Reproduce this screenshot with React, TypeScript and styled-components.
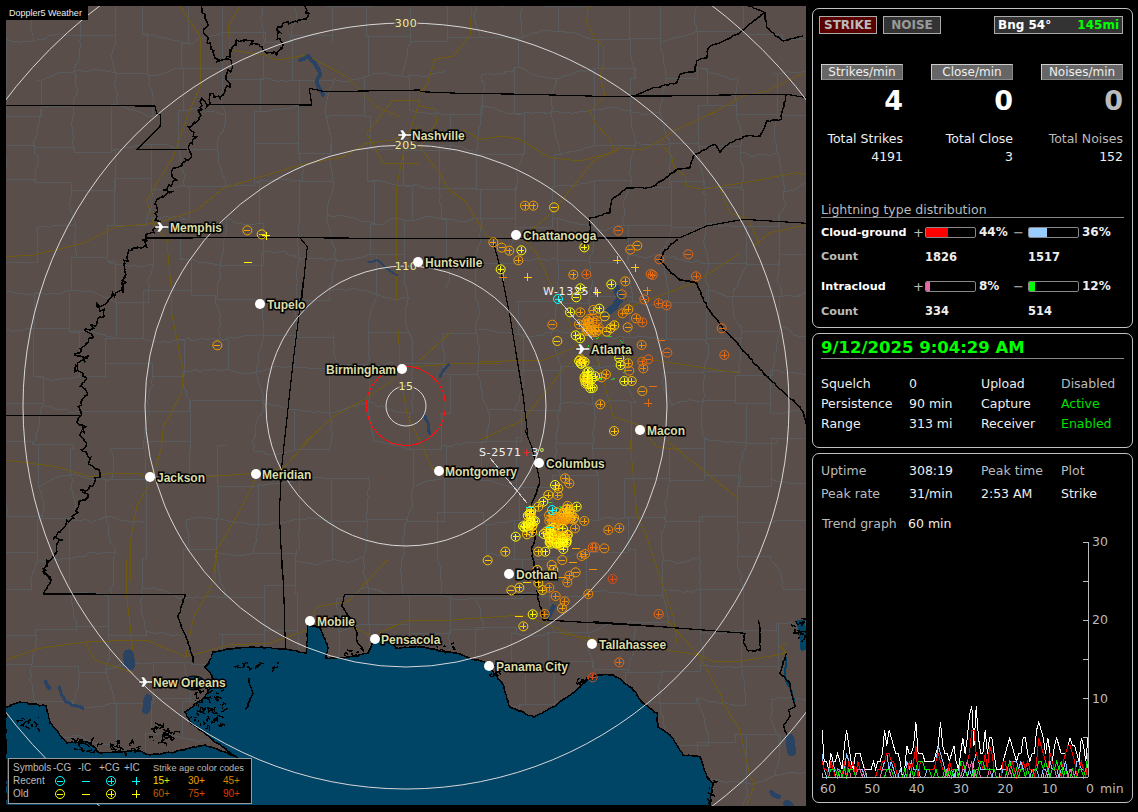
import styled, {createGlobalStyle} from "styled-components";

type Pt = [number, number];
type StrikeKind = "p" | "m" | "P" | "M";
type Strike = [number, number, StrikeKind, string];

const GlobalStyle = createGlobalStyle`
    html, body {
        margin: 0;
        padding: 0;
        background: #000;
    }
    body {
        font-family: "DejaVu Sans", Verdana, sans-serif;
        font-size: 12.5px;
        color: #eee;
    }
`

// coordinates below were read from crops of the picture, each crop has its own origin and scale
const view = (ox: number, oy: number, sx = 3, sy = 3) => (...flat: number[]): Pt[] => {
    const out: Pt[] = [];
    for (let i = 0; i < flat.length; i += 2) out.push([ox + flat[i] / sx, oy + flat[i + 1] / sy]);
    return out;
};
const z5 = view(480, 200);
const z6 = view(460, 430);
const z7 = view(0, 0);
const z8 = view(300, 330);
const z9 = view(0, 560, 2.53, 3);
const z10 = view(560, 620);
const z11 = view(420, 6);
const z12 = view(0, 280);

const seeded = (seed: number) => () => {
    seed = (seed * 1664525 + 1013904223) % 4294967296;
    return seed / 4294967296;
};

const smooth = (pts: Pt[]) => "M" + pts.map(p => `${p[0].toFixed(1)} ${p[1].toFixed(1)}`).join("L");

const jagged = (pts: Pt[], amp: number, seed: number, step = 4) => {
    const rnd = seeded(seed);
    const out: Pt[] = [pts[0]];
    for (let i = 1; i < pts.length; i++) {
        const [ax, ay] = pts[i - 1];
        const [bx, by] = pts[i];
        const n = Math.max(1, Math.round(Math.hypot(bx - ax, by - ay) / step));
        for (let k = 1; k <= n; k++) {
            const t = k / n;
            const j = k === n ? 0 : amp;
            out.push([ax + (bx - ax) * t + (rnd() - .5) * j, ay + (by - ay) * t + (rnd() - .5) * j]);
        }
    }
    return smooth(out);
};

const buildCounties = () => {
    const rnd = seeded(77);
    const size = 37;
    const cols = 23;
    const rows = 23;
    const nodes: Pt[][] = [];
    for (let r = 0; r < rows; r++) {
        nodes.push([]);
        for (let c = 0; c < cols; c++) {
            nodes[r].push([c * size + (rnd() - .5) * 14, r * size + (rnd() - .5) * 14]);
        }
    }
    let d = "";
    const edge = (a: Pt, b: Pt) => {
        if (rnd() < .14) return;
        if (rnd() < .55) {
            d += smooth([a, [b[0], a[1]], b]);
        } else {
            const mid: Pt = [(a[0] + b[0]) / 2 + (rnd() - .5) * 8, (a[1] + b[1]) / 2 + (rnd() - .5) * 8];
            d += jagged([a, mid, b], 3, Math.floor(rnd() * 9999), 5);
        }
    };
    for (let r = 0; r < rows; r++) {
        for (let c = 0; c < cols; c++) {
            if (c < cols - 1) edge(nodes[r][c], nodes[r][c + 1]);
            if (r < rows - 1) edge(nodes[r][c], nodes[r + 1][c]);
        }
    }
    return d;
};

const coast: Pt[] = [
    [6, 806], [6, 707], [20, 702], [46, 706], [50, 723], [67, 743], [87, 742], [100, 753], [120, 752], [135, 750],
    [150, 755], [175, 752], [190, 748], [205, 745], [225, 752], [238, 758], [213, 740], [190, 722], [185, 712],
    [205, 697], [215, 680], [205, 667], [209, 663], [213, 652], [237, 648], [253, 647], [285, 649], [306, 653],
    [308, 625], [320, 628], [328, 648], [326, 658], [344, 658], [368, 653], [375, 635], [389, 640], [396, 648],
    [419, 647], [455, 653], [486, 663], [502, 683], [510, 707], [534, 717], [553, 707], [573, 693], [580, 687],
    [587, 680], [597, 675], [613, 675], [632, 688], [643, 703], [657, 713], [658, 727], [670, 735], [678, 747],
    [683, 755], [700, 757], [707, 777], [713, 783], [710, 806],
];

const stateLines: Pt[][] = [
    z7(18, 316, 465, 318, 470, 340, 482, 345, 480, 380, 412, 448, 560, 448),
    z7(630, 313, 935, 315, 928, 265, 975, 275, 1260, 270),
    z11(0, 257, 120, 262, 320, 265, 580, 272, 640, 270, 740, 270, 1040, 265, 1100, 265, 1160, 275),
    z7(435, 714, 900, 713, 1260, 716),
    z11(0, 698, 780, 695, 860, 660, 970, 640, 1160, 652),
    z7(900, 713, 922, 740, 905, 900),
    z12(910, 0, 880, 240, 845, 560, 838, 700, 848, 900),
    z9(714, 0, 718, 100, 722, 265),
    z9(110, 102, 470, 103),
    z9(872, 103, 1360, 103),
    z12(18, 406, 240, 406),
    z5(40, 127, 60, 200, 90, 350, 130, 590, 145, 720),
    z6(195, 0, 215, 50, 235, 130, 240, 160),
    z6(290, 572, 600, 590, 660, 595),
    z10(100, 5, 240, 15, 555, 40),
];

const wigglyLines: Pt[][] = [
    z7(605, 18, 625, 75, 610, 95, 625, 130, 645, 175, 665, 180, 680, 170, 710, 120, 740, 118, 790, 150, 830, 165, 850, 135, 830, 90, 850, 68, 900, 60, 928, 40, 915, 18),
    z7(680, 170, 695, 195, 680, 240, 690, 250, 675, 270, 660, 295, 640, 280, 620, 320, 605, 295, 600, 330, 590, 365, 565, 380, 590, 410, 565, 440, 575, 470, 545, 490, 515, 520, 530, 540, 490, 570, 515, 575, 470, 600, 465, 640, 475, 680, 430, 720, 440, 740, 395, 745, 375, 790, 370, 880),
    z12(370, 0, 365, 30, 335, 50, 320, 70, 290, 80, 310, 100, 270, 150, 255, 150, 280, 170, 250, 200, 225, 225, 265, 225, 225, 265, 260, 295, 245, 320, 262, 340, 245, 375, 235, 380, 245, 405, 230, 425, 258, 440, 240, 465, 260, 490, 245, 510, 280, 560, 300, 580, 275, 620, 240, 630, 265, 650, 235, 680, 215, 715, 190, 745, 160, 775, 185, 780, 160, 830, 130, 875, 150, 900),
    z9(125, 0, 110, 35, 130, 60, 110, 100),
    z9(470, 103, 450, 170, 480, 260, 490, 310),
    z9(872, 103, 865, 140, 880, 165, 900, 210, 905, 250, 920, 270),
    z11(640, 270, 700, 245, 770, 230, 780, 205, 825, 195, 830, 165, 860, 155, 865, 125, 960, 80, 1025, 25, 1035, 20, 985, 0),
    z11(1035, 20, 1040, 65, 1090, 105, 1150, 90),
    z11(1100, 265, 1085, 320, 1085, 340, 1040, 345, 1020, 390, 980, 390, 930, 410, 900, 440, 885, 415, 840, 440, 820, 450, 810, 485, 770, 490, 745, 510, 690, 545, 620, 545, 575, 580, 570, 620, 510, 635, 510, 690),
    z5(595, 118, 555, 150, 540, 180, 560, 205, 600, 240, 650, 250, 680, 320, 720, 375, 780, 440, 850, 520, 960, 620, 1000, 720),
    z6(240, 160, 215, 220, 225, 320, 215, 360, 230, 440, 235, 510, 250, 570, 290, 572),
    z10(555, 40, 550, 65, 565, 93, 600, 90, 600, 30, 595, 0),
    z10(680, 100, 660, 160, 690, 190, 705, 260, 685, 270, 690, 290, 670, 315, 680, 345),
];

const roads: Pt[][] = [
    z7(18, 770, 100, 765, 250, 730, 350, 680, 470, 670, 590, 630, 670, 565, 800, 525, 900, 495, 1030, 470, 1100, 430, 1180, 420, 1260, 380),
    z7(540, 18, 600, 110, 600, 260, 565, 340, 520, 470, 440, 600, 460, 670, 500, 720, 515, 880),
    z7(720, 18, 685, 80, 690, 150, 795, 165, 830, 180, 920, 165, 1040, 230, 1130, 320, 1200, 350),
    z7(1190, 900, 1190, 560, 1210, 460, 1260, 300),
    z7(1260, 300, 1180, 300, 1100, 400, 1150, 490, 1260, 490),
    z11(155, 0, 150, 90, 100, 150, 45, 160, 20, 240, 0, 260),
    z11(505, 0, 500, 50, 525, 100, 550, 120, 550, 180, 540, 210, 555, 270, 510, 315, 525, 350, 570, 400, 580, 430),
    z11(130, 370, 180, 400, 250, 390, 300, 400, 390, 455, 480, 465, 580, 440, 600, 425, 665, 432, 720, 405, 760, 375, 880, 320, 970, 270, 1040, 255, 1100, 225, 1170, 195),
    z11(720, 410, 755, 450, 760, 480, 795, 510, 800, 540, 850, 550, 1000, 525, 1130, 500, 1170, 510),
    z11(1170, 655, 1050, 680, 1000, 720),
    z11(900, 550, 930, 620, 985, 640, 1020, 720),
    z11(600, 425, 520, 465, 420, 590, 385, 630, 310, 690),
    z11(0, 300, 45, 310, 50, 350, 0, 420),
    z11(0, 420, 70, 520, 80, 545, 140, 590, 175, 650, 200, 690, 250, 710),
    z12(515, 0, 515, 100, 535, 200, 550, 270, 545, 340, 490, 440, 485, 500, 465, 570, 440, 590),
    z12(18, 540, 170, 560, 270, 590, 330, 580, 420, 580, 450, 600, 620, 590, 770, 580, 850, 565, 900, 510, 960, 445),
    z12(450, 610, 410, 680, 390, 790, 390, 900),
    z12(770, 590, 710, 710, 650, 810, 645, 900),
    z9(320, 0, 320, 100, 335, 260, 340, 310),
    z9(15, 300, 100, 265, 220, 245, 370, 240, 470, 290, 580, 255, 680, 250, 780, 210, 800, 140, 880, 125, 980, 0),
    z9(780, 200, 890, 200, 960, 240),
    z9(960, 220, 1030, 180, 1140, 180, 1320, 165, 1400, 200, 1480, 240, 1568, 245),
    z9(545, 0, 540, 50, 530, 90, 490, 170, 470, 290),
    z9(215, 245, 240, 300, 340, 340),
    z8(0, 350, 100, 260, 190, 210, 280, 150, 300, 100, 295, 0),
    z8(340, 110, 480, 100, 600, 100),
    z8(310, 180, 320, 250, 400, 420),
    z8(460, 0, 350, 100),
    z5(0, 485, 190, 480, 290, 440),
    z5(300, 460, 240, 520, 130, 660, 0, 720),
    z5(350, 470, 375, 560, 400, 650, 460, 670, 520, 690, 780, 900),
    z5(125, 110, 170, 160, 230, 290, 270, 370, 290, 440),
    z5(330, 440, 450, 470, 650, 500, 780, 520),
    z5(350, 420, 450, 320, 640, 250, 780, 160),
    z6(510, 30, 530, 250, 560, 320, 640, 560, 650, 640),
    z6(550, 0, 590, 50, 660, 60),
    z10(320, 0, 420, 110, 480, 220, 490, 250, 540, 330, 570, 470, 585, 490, 560, 555),
    z10(0, 40, 60, 50, 320, 90, 420, 105, 460, 125, 530, 125, 680, 100, 660, 80, 680, 70),
];

const lakes: Array<{pts: Pt[], w: number}> = [
    {pts: z7(900, 180, 925, 168, 945, 190, 960, 225, 950, 250, 970, 285), w: 4},
    {pts: z7(1105, 785, 1130, 780, 1190, 825), w: 2},
    {pts: z5(410, 265, 420, 300, 385, 335), w: 7},
    {pts: z8(445, 105, 420, 140), w: 3},
    {pts: z8(375, 258, 390, 310), w: 3},
    {pts: z9(325, 285, 328, 315), w: 11},
    {pts: z9(115, 365, 125, 385), w: 4},
    {pts: z9(150, 380, 165, 425, 210, 445), w: 3},
    {pts: z9(375, 415, 370, 450), w: 8},
    {pts: z10(690, 355, 695, 395), w: 9},
    {pts: z10(635, 517, 655, 530), w: 5},
    {pts: z10(680, 550, 690, 555), w: 7},
    {pts: z6(280, 530, 265, 560), w: 5},
];

const bayWater: Array<{pts: Pt[], w: number}> = [
    {pts: z10(678, 110, 675, 170, 695, 215, 705, 260), w: 2},
    {pts: z10(722, 0, 735, 90), w: 8},
];

const buildIslands = () => {
    const rnd = seeded(31);
    let d = "";
    const patch = (cx: number, cy: number, rx: number, ry: number, count: number) => {
        for (let i = 0; i < count; i++) {
            const x = cx + (rnd() - .5) * rx * 2;
            const y = cy + (rnd() - .5) * ry * 2;
            d += jagged([[x, y], [x + (rnd() - .5) * 12, y + (rnd() - .5) * 10]], 3, Math.floor(rnd() * 9999), 2);
        }
    };
    patch(208, 705, 16, 22, 70);
    patch(163, 735, 12, 9, 30);
    patch(85, 748, 12, 6, 18);
    patch(125, 748, 15, 5, 22);
    patch(30, 722, 10, 6, 12);
    patch(255, 666, 25, 3, 14);
    patch(355, 652, 10, 4, 8);
    patch(445, 648, 10, 4, 8);
    patch(495, 672, 6, 8, 12);
    patch(580, 684, 4, 5, 8);
    patch(800, 632, 5, 14, 16);
    patch(712, 790, 3, 12, 8);
    d += jagged(z9(630, 355, 640, 400, 620, 450), 3, 12, 3);
    return d;
};

const palette = ["#ffff00", "#ffc800", "#f5a000", "#f08a00", "#e86a10", "#e04a10"];
const cyan = "#00ffff";

const fromCrop = (crop: (...flat: number[]) => Pt[], raw: Array<[number, number, StrikeKind, number]>): Strike[] =>
    raw.map(([x, y, k, c]) => {
        const [p] = crop(x, y);
        return [p[0], p[1], k, palette[c]];
    });

const scatter = (seed: number, cx: number, cy: number, rx: number, ry: number, count: number, colors: number[]): Strike[] => {
    const rnd = seeded(seed);
    const out: Strike[] = [];
    for (let i = 0; i < count; i++) {
        const a = rnd() * Math.PI * 2;
        const d = Math.sqrt(rnd());
        out.push([cx + Math.cos(a) * d * rx, cy + Math.sin(a) * d * ry, "p", palette[colors[i % colors.length]]]);
    }
    return out;
};

const strikes: Strike[] = [
    ...fromCrop(z7, [[742, 691, "m", 2], [785, 703, "m", 1], [798, 707, "P", 0], [743, 788, "M", 0]]),
    ...fromCrop(z12, [[652, 196, "m", 2]]),
    ...fromCrop(z5, [
        [135, 17, "p", 2], [160, 17, "p", 2], [222, 22, "m", 1], [40, 127, "p", 2], [65, 143, "m", 2], [88, 152, "p", 2],
        [124, 151, "p", 0], [115, 181, "p", 2], [62, 208, "p", 0], [70, 232, "P", 3], [143, 232, "P", 1], [313, 142, "p", 0],
        [472, 137, "m", 2], [451, 149, "m", 3], [415, 92, "m", 4], [538, 178, "m", 4], [625, 163, "m", 4], [412, 181, "P", 1],
        [465, 203, "P", 1], [280, 224, "p", 2], [319, 223, "p", 4], [512, 222, "p", 4], [518, 225, "p", 4], [648, 229, "p", 4],
        [394, 253, "p", 0], [436, 244, "p", 2], [301, 265, "p", 0], [289, 292, "m", 0], [425, 283, "m", 3], [502, 272, "P", 3],
        [493, 298, "m", 4], [536, 310, "p", 4], [560, 316, "p", 4], [352, 278, "P", 0], [270, 337, "p", 0], [301, 337, "p", 2],
        [358, 326, "p", 0], [340, 330, "p", 2], [374, 349, "m", 1], [428, 340, "p", 3], [445, 328, "p", 2], [468, 355, "p", 3],
        [487, 367, "p", 4], [217, 374, "m", 3], [297, 373, "p", 2], [322, 362, "p", 2], [355, 390, "m", 2], [380, 395, "m", 1],
        [392, 385, "p", 1], [403, 376, "p", 1], [443, 382, "m", 2], [725, 385, "m", 4], [287, 406, "p", 0], [300, 415, "p", 0],
        [232, 423, "m", 1], [485, 435, "p", 3], [542, 421, "M", 4], [562, 458, "m", 4], [733, 465, "p", 4], [418, 474, "m", 0],
        [422, 495, "p", 0], [444, 490, "p", 2], [487, 485, "p", 4], [505, 478, "m", 4], [448, 512, "m", 3], [490, 505, "p", 3],
        [378, 523, "p", 2], [365, 532, "p", 2], [433, 543, "p", 0], [455, 543, "p", 1], [487, 573, "m", 2], [520, 559, "M", 4],
        [505, 610, "P", 4], [361, 613, "p", 2], [402, 693, "p", 1],
    ]),
    ...scatter(3, 592, 326, 8, 8, 14, [2, 3, 2]),
    ...scatter(5, 581, 361, 4, 3, 6, [0, 0, 1]),
    ...scatter(6, 590, 380, 6, 9, 14, [0, 0, 1]),
    ...fromCrop(z6, [
        [315, 145, "p", 2], [328, 160, "p", 2], [285, 165, "p", 0], [295, 175, "p", 1], [293, 195, "p", 2], [265, 195, "p", 1],
        [250, 215, "p", 0], [235, 230, "p", 1], [213, 242, "p", 0], [350, 230, "p", 0], [315, 240, "p", 2], [345, 295, "p", 2],
        [373, 273, "p", 2], [445, 300, "p", 3], [478, 294, "p", 3], [335, 255, "p", 2], [167, 320, "p", 0], [136, 365, "p", 1],
        [83, 391, "m", 1], [235, 365, "p", 1], [256, 365, "p", 0], [310, 357, "p", 0], [405, 352, "p", 4], [398, 352, "p", 4],
        [433, 355, "m", 3], [375, 372, "p", 3], [365, 378, "p", 3], [275, 405, "m", 2], [307, 390, "m", 2], [232, 420, "p", 1],
        [280, 420, "p", 1], [347, 427, "m", 2], [328, 437, "p", 3], [322, 457, "p", 3], [458, 447, "p", 5], [235, 458, "p", 1],
        [154, 481, "m", 1], [178, 473, "p", 1], [247, 480, "p", 1], [268, 473, "p", 3], [287, 498, "p", 3], [385, 492, "p", 3],
        [314, 514, "p", 3], [306, 535, "p", 2], [254, 552, "p", 3], [218, 553, "p", 0], [190, 589, "p", 1], [596, 552, "p", 4],
        [478, 697, "p", 4], [398, 742, "p", 5], [348, 355, "M", 2], [338, 397, "M", 2], [400, 418, "M", 3], [305, 441, "M", 2],
        [202, 457, "M", 1], [178, 559, "M", 1],
    ]),
    ...scatter(8, 529, 524, 7, 11, 20, [0, 1, 0]),
    ...scatter(9, 557, 518, 9, 7, 20, [2, 3, 2]),
    ...scatter(10, 556, 537, 13, 10, 46, [0, 0, 1, 2]),
    ...scatter(11, 569, 514, 7, 9, 12, [2, 1]),
    [558, 299, "p", cyan],
    [552, 510, "p", cyan],
    [530, 507, "M", cyan],
    [550, 527, "M", cyan],
];

const cities: Array<{name: string, x: number, y: number, tx: number, end?: boolean, plane?: boolean}> = [
    {name: "Nashville", x: 405, y: 135, tx: 412, plane: true},
    {name: "Memphis", x: 162, y: 227, tx: 170, plane: true},
    {name: "Atlanta", x: 583, y: 349, tx: 591, plane: true},
    {name: "New Orleans", x: 146, y: 682, tx: 153, plane: true},
    {name: "Chattanooga", x: 516, y: 235, tx: 523},
    {name: "Huntsville", x: 418, y: 262, tx: 425},
    {name: "Tupelo", x: 260, y: 304, tx: 267},
    {name: "Birmingham", x: 402, y: 369, tx: 396, end: true},
    {name: "Macon", x: 640, y: 430, tx: 647},
    {name: "Columbus", x: 539, y: 463, tx: 546},
    {name: "Montgomery", x: 439, y: 471, tx: 445},
    {name: "Meridian", x: 256, y: 474, tx: 262},
    {name: "Jackson", x: 150, y: 477, tx: 157},
    {name: "Dothan", x: 509, y: 574, tx: 516},
    {name: "Mobile", x: 310, y: 621, tx: 317},
    {name: "Pensacola", x: 375, y: 639, tx: 381},
    {name: "Panama City", x: 489, y: 666, tx: 496},
    {name: "Tallahassee", x: 592, y: 644, tx: 599},
];

const rings = [
    {r: 383, label: "300"},
    {r: 261, label: "205"},
    {r: 140, label: "110"},
    {r: 20, label: "15"},
];

const StrikeMark = ({x, y, kind, color}: {x: number, y: number, kind: StrikeKind, color: string}) => {
    const circled = kind === "p" || kind === "m";
    const hasBar = kind === "p" || kind === "P";
    const arm = circled ? 3 : 4;
    return (
        <g stroke={color} strokeWidth={1} fill="none">
            {circled && <circle cx={x} cy={y} r={4.5} shapeRendering="geometricPrecision"/>}
            <line x1={x - arm} y1={y} x2={x + arm} y2={y}/>
            {hasBar && <line x1={x} y1={y - arm} x2={x} y2={y + arm}/>}
        </g>
    );
};

const counties = buildCounties();
const islands = buildIslands();

const RadarSvg = () => (
    <MapSvg viewBox="6 6 800 800" width={800} height={800}>
        <path d={counties} fill="none" stroke="#585c5f" strokeWidth={1}/>
        {roads.map((r, i) => <path key={i} d={smooth(r)} fill="none" stroke="#6f5a12" strokeWidth={1}/>)}
        {lakes.map((l, i) => (
            <path key={i} d={jagged(l.pts, 2, 40 + i)} fill="none" stroke="#2b4363" strokeWidth={l.w} strokeLinejoin="round" strokeLinecap="round"/>
        ))}
        <path d={jagged(coast, 1.4, 5, 3) + "Z"} fill="#004466" stroke="#000" strokeWidth={1.5}/>
        <Pontchartrain cx={194} cy={683} rx={11} ry={7}/>
        {bayWater.map((l, i) => (
            <path key={i} d={jagged(l.pts, 1, 60 + i)} fill="none" stroke="#004466" strokeWidth={l.w}/>
        ))}
        <path d={islands} fill="none" stroke="#000" strokeWidth={1.4}/>
        {stateLines.map((s, i) => <path key={i} d={smooth(s)} fill="none" stroke="#000" strokeWidth={1.2}/>)}
        {wigglyLines.map((s, i) => <path key={i} d={jagged(s, i < 3 ? 5 : 1.6, 100 + i, i < 3 ? 2.5 : 3)} fill="none" stroke="#000" strokeWidth={1.5}/>)}

        <RingCircle cx={406} cy={406} r={504}/>
        {rings.map(ring => <RingCircle key={ring.r} cx={406} cy={406} r={ring.r}/>)}
        <circle cx={406} cy={406} r={39.5} fill="none" stroke="#ff1010" strokeWidth={1}/>
        {rings.map(ring => <RingLabel key={ring.r} x={406} y={406 - ring.r + 4} textAnchor="middle">{ring.label}</RingLabel>)}

        <circle cx={607} cy={358} r={22} fill="none" stroke="#20d020" strokeDasharray="4 9"/>
        <circle cx={548} cy={520} r={18} fill="none" stroke="#20d020" strokeDasharray="4 8"/>
        {strikes.map(([x, y, k, c], i) => <StrikeMark key={i} x={x} y={y} kind={k} color={c}/>)}

        <line x1={558} y1={299} x2={593} y2={340} stroke="#ccc"/>
        <line x1={490} y1={458} x2={527} y2={503} stroke="#ccc"/>
        <TagLabel x={543} y={295}>W-1325<tspan dx={5}>I</tspan></TagLabel>
        <TagLabel x={479} y={456}>S-2571<tspan fill="#ff2020">+</tspan>3<tspan fill="#ffff60">°</tspan></TagLabel>

        {cities.map(city => (
            <g key={city.name}>
                {city.plane
                    ? <PlaneShape d={`M${city.x - 7} ${city.y - 1}h4l-2 -4h3l3 4h5q2 1 0 2h-5l-3 4h-3l2 -4h-4z`}/>
                    : <CityDot cx={city.x} cy={city.y} r={5}/>}
                <CityName x={city.tx} y={city.y + 5} textAnchor={city.end ? "end" : "start"}>{city.name}</CityName>
            </g>
        ))}
    </MapSvg>
);

const white = "622132232146421333211112122364654332014334733322222347433234213535894953363553111234543233553233676535324543334544325425";
const red = "211021010020212021000000011223322100010212402211111232110211102112366322131431000220121011212110254321321110234432012103";
const blue = "310122011013211021100000000123121001002121110001111243211010110010102321111101000111222212101011100110211101120110221102";
const green = "000011101010111000000000000001110000010010122211100100010101102210001012211111000001210101101001122121011212010010011013";
const pink = "000000010000100011010000000111100000000000000000000000001000000112120110000100000000100000000000000001011000000100000000";

const trendLine = (data: string) => smooth(
    data.split("").map((v, i): Pt => [822 + i * 266 / (data.length - 1), 777 - Number(v) * 7.83])
);

const xTicks = [60, 50, 40, 30, 20, 10, 0];
const yTicks = [5, 10, 15, 20, 25, 30];

const TrendChart = () => (
    <ChartSvg viewBox="813 534 318 268" width={318} height={268}>
        <path d={trendLine(white)} fill="none" stroke="#fff"/>
        <path d={trendLine(blue)} fill="none" stroke="#88c4ff"/>
        <path d={trendLine(red)} fill="none" stroke="#ff0000"/>
        <path d={trendLine(pink)} fill="none" stroke="#e868a8"/>
        <path d={trendLine(green)} fill="none" stroke="#00e800"/>
        <line x1={1088} y1={542} x2={1088} y2={777} stroke="#bbb"/>
        <line x1={822} y1={777} x2={1088} y2={777} stroke="#bbb"/>
        {yTicks.map(v => {
            const y = 777 - v * 7.83;
            return (
                <g key={v}>
                    <line x1={1083} y1={y} x2={1088} y2={y} stroke="#bbb"/>
                    {v % 10 === 0 && <AxisText x={1092} y={y + 4}>{v}</AxisText>}
                </g>
            );
        })}
        {xTicks.map(v => {
            const x = 1088 - v * 4.433;
            return (
                <g key={v}>
                    <line x1={x} y1={777} x2={x} y2={773} stroke="#bbb"/>
                    <AxisText x={x - 2} y={793}>{v}</AxisText>
                </g>
            );
        })}
        <AxisText x={1100} y={793}>min</AxisText>
    </ChartSvg>
);

const Bar = ({pct, color}: {pct: number, color: string}) => (
    <BarTrack>
        <BarFill $pct={pct} $color={color}/>
    </BarTrack>
);

const LegendIcon = ({kind, color, nudge}: {kind: StrikeKind, color: string, nudge: number}) => (
    <LegendSvg viewBox="0 0 12 12" width={12} height={12} $nudge={nudge}>
        <StrikeMark x={6} y={6} kind={kind} color={color}/>
    </LegendSvg>
);

export default function App() {
    return (
        <>
            <GlobalStyle/>
            <Page>
                <MapFrame>
                    <RadarSvg/>
                    <Badge>Doppler5 Weather</Badge>
                    <Legend>
                        <span>Symbols</span><span>-CG</span><span>-IC</span><span>+CG</span><span>+IC</span>
                        <LegendTitle>Strike age color codes</LegendTitle>
                        <span>Recent</span>
                        <LegendIcon kind="m" color={cyan} nudge={1}/><LegendIcon kind="M" color={cyan} nudge={2}/>
                        <LegendIcon kind="p" color={cyan} nudge={6}/><LegendIcon kind="P" color={cyan} nudge={6}/>
                        <AgeCode $color="#f0e000">15+</AgeCode><AgeCode $color="#e8a000">30+</AgeCode><AgeCode $color="#d88000">45+</AgeCode>
                        <span>Old</span>
                        <LegendIcon kind="m" color="#ffff00" nudge={1}/><LegendIcon kind="M" color="#ffff00" nudge={2}/>
                        <LegendIcon kind="p" color="#ffff00" nudge={6}/><LegendIcon kind="P" color="#ffff00" nudge={6}/>
                        <AgeCode $color="#c06000">60+</AgeCode><AgeCode $color="#d05000">75+</AgeCode><AgeCode $color="#e03000">90+</AgeCode>
                    </Legend>
                </MapFrame>

                <Sidebar>
                    <StatsCard>
                        <TopRow>
                            <ModeChip $bg="#5a0000" $fg="#bbb">STRIKE</ModeChip>
                            <ModeChip $bg="#333" $fg="#999">NOISE</ModeChip>
                            <Bearing>
                                <span>Bng 54°</span>
                                <BearingRange>145mi</BearingRange>
                            </Bearing>
                        </TopRow>
                        <RateGrid>
                            <RateHeader>Strikes/min</RateHeader>
                            <RateHeader>Close/min</RateHeader>
                            <RateHeader>Noises/min</RateHeader>
                            <RateValue>4</RateValue>
                            <RateValue>0</RateValue>
                            <RateValue $muted>0</RateValue>
                            <TotalLabel>Total Strikes</TotalLabel>
                            <TotalLabel>Total Close</TotalLabel>
                            <TotalLabel $muted>Total Noises</TotalLabel>
                            <TotalValue>4191</TotalValue>
                            <TotalValue>3</TotalValue>
                            <TotalValue>152</TotalValue>
                        </RateGrid>
                        <SectionTitle>Lightning type distribution</SectionTitle>
                        <DistGrid>
                            <DistName>Cloud-ground</DistName>
                            <Sign>+</Sign><Bar pct={44} color="#ff0000"/><Percent>44%</Percent>
                            <Sign>−</Sign><Bar pct={36} color="#99ccff"/><Percent>36%</Percent>
                            <CountLabel>Count</CountLabel>
                            <span/><Count>1826</Count><span/>
                            <span/><Count>1517</Count><span/>
                            <DistName>Intracloud</DistName>
                            <Sign>+</Sign><Bar pct={8} color="#e868a8"/><Percent>8%</Percent>
                            <Sign>−</Sign><Bar pct={12} color="#00ff00"/><Percent>12%</Percent>
                            <CountLabel>Count</CountLabel>
                            <span/><Count>334</Count><span/>
                            <span/><Count>514</Count><span/>
                        </DistGrid>
                    </StatsCard>

                    <StatusCard>
                        <Clock>9/12/2025 9:04:29 AM</Clock>
                        <InfoGrid>
                            <span>Squelch</span><span>0</span><span>Upload</span><InfoState $color="#bbb">Disabled</InfoState>
                            <span>Persistence</span><span>90 min</span><span>Capture</span><InfoState $color="#00e000">Active</InfoState>
                            <span>Range</span><span>313 mi</span><span>Receiver</span><InfoState $color="#00e000">Enabled</InfoState>
                        </InfoGrid>
                    </StatusCard>

                    <TrendCard>
                        <PeakGrid>
                            <Dim>Uptime</Dim><span>308:19</span><Dim>Peak time</Dim><Dim>Plot</Dim>
                            <Dim>Peak rate</Dim><span>31/min</span><span>2:53 AM</span><span>Strike</span>
                        </PeakGrid>
                        <TrendTitle><Dim>Trend graph</Dim><span>60 min</span></TrendTitle>
                        <TrendChart/>
                    </TrendCard>
                </Sidebar>
            </Page>
        </>
    );
}

const Page = styled.div`
    display: flex;
    align-items: flex-start;
    gap: 6px;
    padding: 6px;
    width: 1138px;
    height: 812px;
    box-sizing: border-box;
    overflow: hidden;
    background: #000;
`

const MapFrame = styled.div`
    position: relative;
    flex: 0 0 800px;
    width: 800px;
    height: 800px;
    overflow: hidden;
    background: #5a4e4b;
`

const MapSvg = styled.svg`
    display: block;
    shape-rendering: crispEdges;
`

const RingCircle = styled.circle`
    fill: none;
    stroke: #d8d8d8;
    stroke-width: 1;
    shape-rendering: geometricPrecision;
`

const CityDot = styled.circle`
    fill: #fff;
    shape-rendering: geometricPrecision;
`

const PlaneShape = styled.path`
    fill: #fff;
    stroke: #222;
    stroke-width: .4;
    shape-rendering: geometricPrecision;
`

const Pontchartrain = styled.ellipse`
    fill: #004466;
    stroke: #000;
    shape-rendering: geometricPrecision;
`

const CityName = styled.text`
    font-family: "Liberation Sans", Arial, sans-serif;
    font-size: 12px;
    font-weight: 700;
    fill: #dcdca6;
    stroke: #000;
    stroke-width: 3px;
    paint-order: stroke;
    stroke-linejoin: miter;
`

const RingLabel = styled.text`
    font-family: "DejaVu Sans", sans-serif;
    font-size: 11px;
    letter-spacing: .5px;
    fill: #eeee99;
    stroke: #5a4e4b;
    stroke-width: 3px;
    paint-order: stroke;
`

const TagLabel = styled.text`
    font-family: "DejaVu Sans", sans-serif;
    font-size: 11px;
    letter-spacing: .6px;
    fill: #eee;
`

const Badge = styled.div`
    position: absolute;
    top: 0;
    left: 0;
    width: 82px;
    height: 14px;
    background: #000;
    color: #eee;
    font-family: "Liberation Sans", Arial, sans-serif;
    font-size: 9px;
    line-height: 14px;
    text-indent: 3px;
    white-space: nowrap;
`

const Legend = styled.div`
    position: absolute;
    left: 2px;
    bottom: 2px;
    width: 244px;
    height: 46px;
    box-sizing: border-box;
    padding: 2px 0 0 4px;
    display: grid;
    grid-template-columns: 40px 25px 21px 25px 29px 35px 35px 25px;
    grid-auto-rows: 13px;
    align-items: center;
    background: #000;
    border: 1px solid #999;
    color: #bbb;
    font-family: "Liberation Sans", Arial, sans-serif;
    font-size: 10px;
    white-space: nowrap;
`

const LegendTitle = styled.span`
    grid-column: span 3;
    font-size: 9.2px;
`

const LegendSvg = styled.svg<{$nudge: number}>`
    display: block;
    margin-left: ${props => props.$nudge}px;
    shape-rendering: crispEdges;
`

const AgeCode = styled.span<{$color: string}>`
    color: ${props => props.$color};
`

const Sidebar = styled.div`
    flex: 0 0 321px;
    display: flex;
    flex-direction: column;
    gap: 5px;
    margin-top: 2px;
`

const Card = styled.section`
    box-sizing: border-box;
    border: 1px solid #c0c0c0;
    border-radius: 7px;
    padding: 0 8px;
    background: #000;
`

const StatsCard = styled(Card)`
    height: 320px;
`

const StatusCard = styled(Card)`
    height: 115px;
`

const TrendCard = styled(Card)`
    position: relative;
    height: 350px;
`

const TopRow = styled.div`
    display: flex;
    gap: 6px;
    margin: 7px 1px 0 -2px;
`

const ModeChip = styled.div<{$bg: string, $fg: string}>`
    box-sizing: border-box;
    width: 58px;
    height: 18px;
    border: 1px solid #aaa;
    background: ${props => props.$bg};
    color: ${props => props.$fg};
    font-family: "DejaVu Sans", sans-serif;
    font-weight: 700;
    font-size: 12px;
    line-height: 16px;
    text-align: center;
`

const Bearing = styled.div`
    box-sizing: border-box;
    display: flex;
    justify-content: space-between;
    width: 129px;
    height: 18px;
    margin-left: auto;
    padding: 0 3px;
    border: 1px solid #aaa;
    background: #333;
    color: #fff;
    font-weight: 700;
    font-size: 12px;
    line-height: 16px;
`

const BearingRange = styled.span`
    color: #00ff00;
`

const RateGrid = styled.div`
    display: grid;
    grid-template-columns: repeat(3, 82px);
    column-gap: 28px;
    margin-top: 30px;
`

const RateHeader = styled.div`
    box-sizing: border-box;
    height: 16px;
    border: 1px solid #ccc;
    border-bottom-color: #888;
    border-right-color: #888;
    background: #666;
    color: #eee;
    font-size: 12px;
    line-height: 14px;
    text-align: center;
    white-space: nowrap;
`

const RateValue = styled.div<{$muted?: boolean}>`
    height: 40px;
    font-size: 27px;
    font-weight: 700;
    line-height: 42px;
    text-align: right;
    color: ${props => props.$muted ? "#bbb" : "#fff"};
`

const TotalLabel = styled.div<{$muted?: boolean}>`
    margin-top: 11px;
    line-height: 15px;
    text-align: right;
    white-space: nowrap;
    color: ${props => props.$muted ? "#bbb" : "#eee"};
`

const TotalValue = styled.div`
    margin-top: 3px;
    line-height: 15px;
    text-align: right;
`

const SectionTitle = styled.div`
    margin-top: 39px;
    height: 14px;
    line-height: 14px;
    border-bottom: 1px solid #888;
    color: #bbb;
`

const DistGrid = styled.div`
    display: grid;
    grid-template-columns: 92px 12px 51px 37px 15px 51px 36px;
    grid-template-rows: 22px 27px 32px 18px;
    align-items: center;
    margin-top: 3px;
    font-weight: 700;
    font-size: 12px;
`

const DistName = styled.span`
    color: #fff;
    font-size: 11.2px;
    white-space: nowrap;
`

const Sign = styled.span`
    color: #bbb;
    font-weight: 400;
    font-size: 13px;
`

const BarTrack = styled.div`
    box-sizing: border-box;
    width: 51px;
    height: 11px;
    border: 1px solid #888;
    border-radius: 2px;
    background: #000;
    overflow: hidden;
`

const BarFill = styled.div<{$pct: number, $color: string}>`
    height: 100%;
    width: ${props => props.$pct}%;
    background: ${props => props.$color};
`

const Percent = styled.span`
    padding-left: 3px;
    color: #eee;
`

const CountLabel = styled.span`
    color: #bbb;
    font-size: 11.2px;
`

const Count = styled.span`
    color: #eee;
    font-size: 11.5px;
`

const Clock = styled.div`
    margin-top: 4px;
    height: 20px;
    line-height: 20px;
    border-bottom: 1px solid #888;
    color: #00ff00;
    font-size: 16.5px;
    font-weight: 700;
    white-space: nowrap;
`

const InfoGrid = styled.div`
    display: grid;
    grid-template-columns: 88px 72px 80px 1fr;
    grid-auto-rows: 20px;
    align-items: center;
    margin-top: 14px;
`

const InfoState = styled.span<{$color: string}>`
    color: ${props => props.$color};
`

const PeakGrid = styled.div`
    display: grid;
    grid-template-columns: 88px 72px 80px 1fr;
    grid-auto-rows: 23px;
    align-items: center;
    margin-top: 5px;
`

const Dim = styled.span`
    color: #bbb;
`

const TrendTitle = styled.div`
    display: grid;
    grid-template-columns: 86px 1fr;
    margin-top: 11px;
    padding-left: 1px;
    line-height: 15px;
`

const ChartSvg = styled.svg`
    position: absolute;
    left: 0;
    bottom: 0;
    shape-rendering: crispEdges;
`

const AxisText = styled.text`
    font-family: "DejaVu Sans", sans-serif;
    font-size: 12.5px;
    fill: #bbb;
`
